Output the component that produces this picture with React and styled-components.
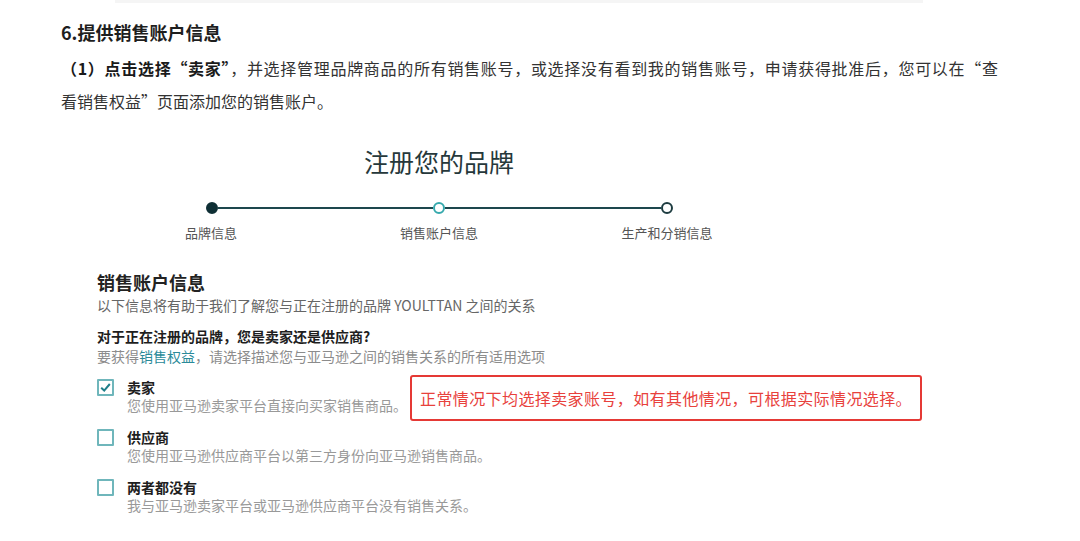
import React from 'react'
import styled, { createGlobalStyle } from 'styled-components'

const GlobalStyle = createGlobalStyle`
  body {
    margin: 0;
    background: #ffffff;
    font-family: "Noto Sans CJK SC", "Noto Sans", sans-serif;
    color: #333;
  }
`

const steps = [
  { label: '品牌信息', state: 'done' },
  { label: '销售账户信息', state: 'current' },
  { label: '生产和分销信息', state: 'todo' },
]

const options = [
  { title: '卖家', desc: '您使用亚马逊卖家平台直接向买家销售商品。', checked: true },
  { title: '供应商', desc: '您使用亚马逊供应商平台以第三方身份向亚马逊销售商品。' },
  { title: '两者都没有', desc: '我与亚马逊卖家平台或亚马逊供应商平台没有销售关系。' },
]

const CheckIcon = () => (
  <svg width="13" height="13" viewBox="0 0 13 13">
    <path d="M2.2 6.8 L5.2 9.6 L10.8 3" fill="none" stroke="#1f7f8a" strokeWidth="2" />
  </svg>
)

const App = () => {
  return (
    <Page>
      <GlobalStyle />
      <TopStrip />
      <Article>
        <Heading>6.提供销售账户信息</Heading>
        <Para>
          <Line justify>
            <b>（1）点击选择“卖家”</b>，并选择管理品牌商品的所有销售账号，或选择没有看到我的销售账号，申请获得批准后，您可以在“查
          </Line>
          <Line>看销售权益”页面添加您的销售账户。</Line>
        </Para>
      </Article>

      <Panel>
        <Title>注册您的品牌</Title>
        <Track>
          {steps.map((s, i) => (
            <React.Fragment key={s.label}>
              {i > 0 && <TrackLine />}
              <Dot state={s.state} />
            </React.Fragment>
          ))}
        </Track>
        <StepLabels>
          {steps.map(s => (
            <StepLabel key={s.label}>{s.label}</StepLabel>
          ))}
        </StepLabels>

        <SectionTitle>销售账户信息</SectionTitle>
        <Subtitle>以下信息将有助于我们了解您与正在注册的品牌 YOULTTAN 之间的关系</Subtitle>
        <Question>对于正在注册的品牌，您是卖家还是供应商?</Question>
        <Helper>
          要获得<HelperLink>销售权益</HelperLink>，请选择描述您与亚马逊之间的销售关系的所有适用选项
        </Helper>

        <OptionList>
          {options.map(o => (
            <Option key={o.title}>
              <Box>{o.checked && <CheckIcon />}</Box>
              <OptionText>
                <OptionTitle>{o.title}</OptionTitle>
                <OptionDesc>{o.desc}</OptionDesc>
              </OptionText>
              {o.checked && (
                <Callout>正常情况下均选择卖家账号，如有其他情况，可根据实际情况选择。</Callout>
              )}
            </Option>
          ))}
        </OptionList>
      </Panel>
    </Page>
  )
}

export default App

const Page = styled.div`
  width: 1080px;
  height: 541px;
  overflow: hidden;
`
const TopStrip = styled.div`
  margin-left: 115px;
  width: 808px;
  height: 3px;
  background: #f5f5f5;
`
const Article = styled.div`
  padding-left: 61px;
`
const Heading = styled.h2`
  margin: 17px 0 0;
  font-size: 18px;
  line-height: 24px;
  font-weight: 700;
  color: #1e1e1e;
`
const Para = styled.div`
  margin-top: 8px;
  font-size: 16px;
  line-height: 33px;
  color: #333;
  b {
    font-weight: 700;
    color: #1a1a1a;
  }
`
const Line = styled.div`
  width: ${p => (p.justify ? '937px' : 'auto')};
  white-space: nowrap;
  text-align: ${p => (p.justify ? 'justify' : 'left')};
  text-align-last: ${p => (p.justify ? 'justify' : 'auto')};
`
const Panel = styled.div`
  margin: 26px 0 0 97px;
  width: 684px;
`
const Title = styled.div`
  text-align: center;
  font-size: 25px;
  line-height: 34px;
  color: #26383b;
`
const Track = styled.div`
  display: flex;
  align-items: center;
  width: 467px;
  height: 12px;
  margin: 24px auto 0;
`
const TrackLine = styled.div`
  flex: 1;
  height: 2px;
  background: #1d474d;
`
const Dot = styled.div`
  width: 12px;
  height: 12px;
  box-sizing: border-box;
  border-radius: 50%;
  background: ${p => (p.state === 'done' ? '#0f2f35' : '#fff')};
  border: 2px solid
    ${p => (p.state === 'current' ? '#36a9ad' : p.state === 'done' ? '#0f2f35' : '#1d3c40')};
`
const StepLabels = styled.div`
  display: grid;
  grid-template-columns: repeat(3, 228px);
  margin-top: 10px;
`
const StepLabel = styled.div`
  text-align: center;
  font-size: 13px;
  line-height: 18px;
  color: #555;
`
const SectionTitle = styled.div`
  margin-top: 28px;
  font-size: 18px;
  line-height: 24px;
  font-weight: 700;
  color: #222;
`
const Subtitle = styled.div`
  margin-top: 1px;
  font-size: 14px;
  line-height: 20px;
  color: #666;
  white-space: nowrap;
`
const Question = styled.div`
  margin-top: 11px;
  font-size: 14px;
  line-height: 20px;
  font-weight: 700;
  color: #1e1e1e;
  white-space: nowrap;
`
const Helper = styled.div`
  font-size: 14px;
  line-height: 20px;
  color: #8c8c8c;
  white-space: nowrap;
`
const HelperLink = styled.span`
  color: #2a8a99;
`
const OptionList = styled.div`
  display: flex;
  flex-direction: column;
  gap: 14px;
  margin-top: 12px;
`
const Option = styled.div`
  position: relative;
  display: flex;
  align-items: flex-start;
`
const Box = styled.div`
  width: 17px;
  height: 17px;
  box-sizing: border-box;
  margin-top: 1px;
  border: 2px solid #6fb6bb;
  border-radius: 1px;
  display: flex;
  align-items: center;
  justify-content: center;
  flex-shrink: 0;
`
const OptionText = styled.div`
  margin-left: 13px;
`
const OptionTitle = styled.div`
  font-size: 14px;
  line-height: 18px;
  font-weight: 700;
  color: #1e1e1e;
`
const OptionDesc = styled.div`
  font-size: 14px;
  line-height: 18px;
  color: #999;
  white-space: nowrap;
`
const Callout = styled.div`
  position: absolute;
  left: 313px;
  top: -3px;
  width: 512px;
  height: 46px;
  box-sizing: border-box;
  border: 2px solid #e53935;
  border-radius: 3px;
  padding-left: 8px;
  display: flex;
  align-items: center;
  font-size: 16px;
  letter-spacing: 0.4px;
  color: #e8413c;
  white-space: nowrap;
`
